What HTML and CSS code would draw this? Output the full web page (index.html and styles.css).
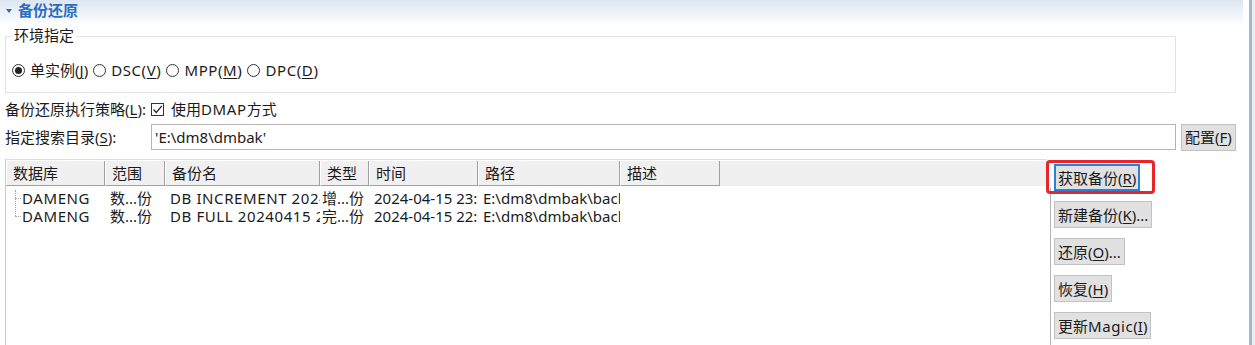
FILE: index.html
```html
<!DOCTYPE html>
<html lang="zh-CN">
<head>
    <meta charset="UTF-8">
    <title>备份还原</title>
    <link rel="stylesheet" href="styles.css">
</head>
<body>
<div class="page">
    <div class="main">
        <div class="section-head"><span class="caret"></span>备份还原</div>

        <div class="env">
            <div class="env-title">环境指定</div>
            <div class="radios">
                <span class="radio checked"></span><span class="opt">单实例(<u>J</u>)</span>
                <span class="radio"></span><span class="opt latin">DSC(<u>V</u>)</span>
                <span class="radio"></span><span class="opt latin">MPP(<u>M</u>)</span>
                <span class="radio"></span><span class="opt latin">DPC(<u>D</u>)</span>
            </div>
        </div>

        <div class="row">
            <span class="label">备份还原执行策略(<u>L</u>):</span>
            <span class="check">
                <svg width="11" height="11" viewBox="0 0 11 11"><path d="M1.5 5.5 L4.3 8.5 L9.8 1.8" fill="none" stroke="#222" stroke-width="1.2"/></svg>
            </span>
            <span class="opt">使用<span class="latin">DMAP</span>方式</span>
        </div>

        <div class="row dir-row">
            <span class="label">指定搜索目录(<u>S</u>):</span>
            <div class="input">'E:\dm8\dmbak'</div>
            <button class="btn">配置(<u>F</u>)</button>
        </div>

        <div class="work">
            <div class="table">
                <div class="thead">
                    <div class="th c1">数据库</div>
                    <div class="th c2">范围</div>
                    <div class="th c3">备份名</div>
                    <div class="th c4">类型</div>
                    <div class="th c5">时间</div>
                    <div class="th c6">路径</div>
                    <div class="th c7">描述</div>
                </div>
                <div class="tbody">
                    <div class="tree-line"></div>
                    <div class="tr">
                        <div class="td c1 first latin">DAMENG</div>
                        <div class="td c2">数...份</div>
                        <div class="td c3 latin">DB INCREMENT 20240415 230110</div>
                        <div class="td c4">增...份</div>
                        <div class="td c5">2024-04-15 23:01:10</div>
                        <div class="td c6">E:\dm8\dmbak\backup</div>
                        <div class="td c7"></div>
                    </div>
                    <div class="tr">
                        <div class="td c1 first latin">DAMENG</div>
                        <div class="td c2">数...份</div>
                        <div class="td c3 latin">DB FULL 20240415 225904</div>
                        <div class="td c4">完...份</div>
                        <div class="td c5">2024-04-15 22:59:04</div>
                        <div class="td c6">E:\dm8\dmbak\backup</div>
                        <div class="td c7"></div>
                    </div>
                </div>
            </div>
            <div class="actions">
                <div class="marked">
                    <button class="btn focus">获取备份(<u>R</u>)</button>
                    <span class="mark"></span>
                </div>
                <button class="btn">新建备份(<u>K</u>)...</button>
                <button class="btn">还原(<u>O</u>)...</button>
                <button class="btn">恢复(<u>H</u>)</button>
                <button class="btn">更新<span class="latin">Magic</span>(<u>I</u>)</button>
            </div>
        </div>
    </div>
    <div class="edge"></div>
</div>
</body>
</html>
```

FILE: styles.css
```css
body {
    margin: 0;
    background: #ffffff;
    font-family: "Noto Sans", "Noto Sans CJK SC", sans-serif;
    font-size: 15px;
    color: #1b1b1b;
    overflow: hidden;
}
u {
    text-decoration-thickness: 1px;
    text-underline-offset: 2px;
}
/* capitals in the original font run a little wider */
.latin {
    letter-spacing: 0.6px;
}
.page {
    display: flex;
    width: 1255px;
    height: 345px;
}
.main {
    width: 1249px;
    display: flex;
    flex-direction: column;
}
.edge {
    width: 6px;
    border-left: 3px solid #a3b6d0;
    background: #eaeff6;
    box-sizing: border-box;
}
.section-head {
    width: 1243px;
    height: 26px;
    line-height: 20px;
    padding-left: 18px;
    box-sizing: border-box;
    position: relative;
    background: linear-gradient(#dce6f2, #ffffff);
    color: #2a6cc2;
    font-weight: bold;
    font-size: 15px;
}
.caret {
    position: absolute;
    left: 6px;
    top: 9px;
    border-top: 4px solid #2a6cc2;
    border-left: 3px solid transparent;
    border-right: 3px solid transparent;
}
.env {
    margin: 10px 0 0 5px;
    width: 1171px;
    height: 57px;
    border: 1px solid #e3e3e3;
    box-sizing: border-box;
    position: relative;
}
.env-title {
    position: absolute;
    left: 6px;
    top: -12px;
    background: #ffffff;
    padding: 0 2px;
    line-height: 20px;
}
.radios {
    display: flex;
    align-items: center;
    margin: 23px 0 0 6px;
    line-height: 20px;
}
.radio {
    width: 13px;
    height: 13px;
    border: 1px solid #333333;
    border-radius: 50%;
    box-sizing: border-box;
    margin-right: 5px;
    position: relative;
}
.radio.checked::after {
    content: "";
    position: absolute;
    left: 2px;
    top: 2px;
    width: 7px;
    height: 7px;
    border-radius: 50%;
    background: #222222;
}
.opt {
    margin-right: 5px;
}
.row {
    display: flex;
    align-items: center;
    height: 20px;
    margin: 6px 0 0 5px;
    line-height: 20px;
}
.label {
    width: 146px;
    white-space: nowrap;
}
.check {
    width: 13px;
    height: 13px;
    border: 1px solid #333333;
    box-sizing: border-box;
    display: flex;
    align-items: center;
    justify-content: center;
    margin-right: 7px;
}
.dir-row {
    height: 28px;
    margin-top: 4px;
}
.input {
    width: 1025px;
    height: 26px;
    border: 1px solid #b5b5b5;
    box-sizing: border-box;
    padding-left: 3px;
    line-height: 24px;
    margin-right: 5px;
}
.btn {
    font-family: inherit;
    font-size: 15px;
    color: #1b1b1b;
    background: #e1e1e1;
    border: 1px solid #c2c2c2;
    height: 27px;
    padding: 0 3px;
    line-height: 24px;
    white-space: nowrap;
}
.work {
    display: flex;
    margin: 8px 0 0 5px;
    flex: 1;
}
.table {
    width: 1042px;
    border-top: 1px solid #dcdcdc;
    border-left: 1px solid #c8c8c8;
    box-sizing: border-box;
    padding-top: 1px;
}
.thead {
    display: flex;
    height: 25px;
    background: #f0f0f0;
}
.th {
    box-sizing: border-box;
    padding-left: 6px;
    line-height: 24px;
    border-left: 1px solid #ffffff;
    border-right: 1px solid #a0a0a0;
    border-bottom: 1px solid #a0a0a0;
}
.c1 { width: 99px; }
.c2 { width: 60px; }
.c3 { width: 155px; }
.c4 { width: 49px; }
.c5 { width: 109px; }
.c6 { width: 142px; }
.c7 { width: 100px; }
.tbody {
    position: relative;
    padding-top: 3px;
}
.tree-line {
    position: absolute;
    left: 9px;
    top: 4px;
    width: 5px;
    height: 26px;
    border-left: 1px dotted #a8a8a8;
}
.tr {
    display: flex;
    height: 18px;
    line-height: 18px;
    position: relative;
}
.tr::before {
    content: "";
    position: absolute;
    left: 9px;
    top: 9px;
    width: 6px;
    border-top: 1px dotted #a8a8a8;
}
.td {
    box-sizing: border-box;
    padding-left: 5px;
    white-space: nowrap;
    overflow: hidden;
}
.td.first { padding-left: 16px; }
.td.c4 { padding-left: 2px; }
.actions {
    margin-left: 3px;
    border-left: 1px solid #b4b4b4;
    margin-top: 29px;
    padding-left: 3px;
    display: flex;
    flex-direction: column;
    align-items: flex-start;
    gap: 10px;
}
.marked {
    position: relative;
    margin-top: -24px;
}
.btn.focus {
    border: 2px solid #2a7fd8;
    padding: 0 2px;
}
.mark {
    position: absolute;
    left: -8px;
    top: -4px;
    right: -15px;
    bottom: -3px;
    border: 3px solid #e8262a;
    border-radius: 4px;
}
```
